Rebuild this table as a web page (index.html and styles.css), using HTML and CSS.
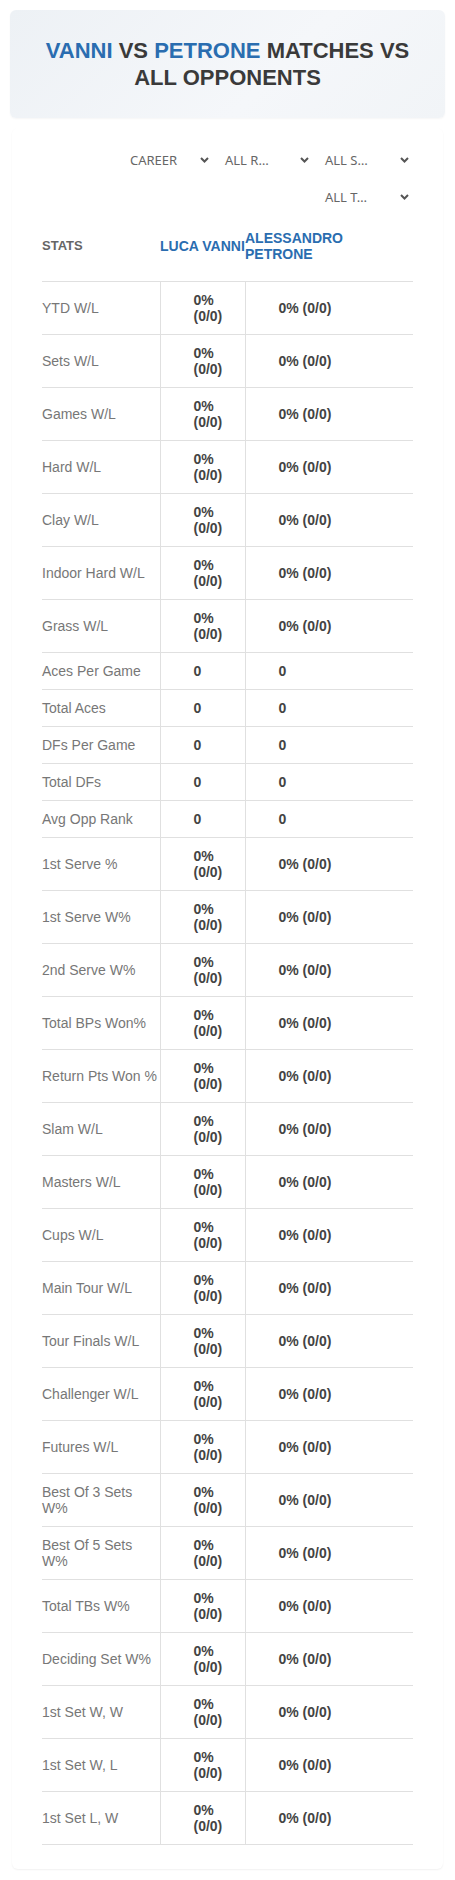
FILE: index.html
```html
<!DOCTYPE html>
<html lang="en">
<head>
    <meta charset="UTF-8">
    <title>Vanni vs Petrone</title>
    <link rel="stylesheet" href="styles.css">
</head>
<body>
    <div class="hero">
        <h1><span class="blue">VANNI</span> VS <span class="blue">PETRONE</span> MATCHES VS ALL OPPONENTS</h1>
    </div>

    <div class="card">
        <div class="filters">
            <div class="filter"><span>CAREER</span><svg width="9" height="6" viewBox="0 0 9 6"><polyline points="1,1 4.5,4.5 8,1"/></svg></div>
            <div class="filter"><span>ALL R…</span><svg width="9" height="6" viewBox="0 0 9 6"><polyline points="1,1 4.5,4.5 8,1"/></svg></div>
            <div class="filter"><span>ALL S…</span><svg width="9" height="6" viewBox="0 0 9 6"><polyline points="1,1 4.5,4.5 8,1"/></svg></div>
            <div class="filter"><span>ALL T…</span><svg width="9" height="6" viewBox="0 0 9 6"><polyline points="1,1 4.5,4.5 8,1"/></svg></div>
        </div>

        <table class="stats">
            <colgroup>
                <col class="c-label">
                <col class="c-p1">
                <col class="c-p2">
            </colgroup>
            <thead>
                <tr>
                    <th class="th-stats">STATS</th>
                    <th class="th-player">LUCA VANNI</th>
                    <th class="th-player">ALESSANDRO PETRONE</th>
                </tr>
            </thead>
            <tbody>
                <tr><td>YTD W/L</td><td>0% (0/0)</td><td>0% (0/0)</td></tr>
                <tr><td>Sets W/L</td><td>0% (0/0)</td><td>0% (0/0)</td></tr>
                <tr><td>Games W/L</td><td>0% (0/0)</td><td>0% (0/0)</td></tr>
                <tr><td>Hard W/L</td><td>0% (0/0)</td><td>0% (0/0)</td></tr>
                <tr><td>Clay W/L</td><td>0% (0/0)</td><td>0% (0/0)</td></tr>
                <tr><td>Indoor Hard W/L</td><td>0% (0/0)</td><td>0% (0/0)</td></tr>
                <tr><td>Grass W/L</td><td>0% (0/0)</td><td>0% (0/0)</td></tr>
                <tr><td>Aces Per Game</td><td>0</td><td>0</td></tr>
                <tr><td>Total Aces</td><td>0</td><td>0</td></tr>
                <tr><td>DFs Per Game</td><td>0</td><td>0</td></tr>
                <tr><td>Total DFs</td><td>0</td><td>0</td></tr>
                <tr><td>Avg Opp Rank</td><td>0</td><td>0</td></tr>
                <tr><td>1st Serve %</td><td>0% (0/0)</td><td>0% (0/0)</td></tr>
                <tr><td>1st Serve W%</td><td>0% (0/0)</td><td>0% (0/0)</td></tr>
                <tr><td>2nd Serve W%</td><td>0% (0/0)</td><td>0% (0/0)</td></tr>
                <tr><td>Total BPs Won%</td><td>0% (0/0)</td><td>0% (0/0)</td></tr>
                <tr><td>Return Pts Won %</td><td>0% (0/0)</td><td>0% (0/0)</td></tr>
                <tr><td>Slam W/L</td><td>0% (0/0)</td><td>0% (0/0)</td></tr>
                <tr><td>Masters W/L</td><td>0% (0/0)</td><td>0% (0/0)</td></tr>
                <tr><td>Cups W/L</td><td>0% (0/0)</td><td>0% (0/0)</td></tr>
                <tr><td>Main Tour W/L</td><td>0% (0/0)</td><td>0% (0/0)</td></tr>
                <tr><td>Tour Finals W/L</td><td>0% (0/0)</td><td>0% (0/0)</td></tr>
                <tr><td>Challenger W/L</td><td>0% (0/0)</td><td>0% (0/0)</td></tr>
                <tr><td>Futures W/L</td><td>0% (0/0)</td><td>0% (0/0)</td></tr>
                <tr><td>Best Of 3 Sets W%</td><td>0% (0/0)</td><td>0% (0/0)</td></tr>
                <tr><td>Best Of 5 Sets W%</td><td>0% (0/0)</td><td>0% (0/0)</td></tr>
                <tr><td>Total TBs W%</td><td>0% (0/0)</td><td>0% (0/0)</td></tr>
                <tr><td>Deciding Set W%</td><td>0% (0/0)</td><td>0% (0/0)</td></tr>
                <tr><td>1st Set W, W</td><td>0% (0/0)</td><td>0% (0/0)</td></tr>
                <tr><td>1st Set W, L</td><td>0% (0/0)</td><td>0% (0/0)</td></tr>
                <tr><td>1st Set L, W</td><td>0% (0/0)</td><td>0% (0/0)</td></tr>
            </tbody>
        </table>
    </div>
</body>
</html>
```

FILE: styles.css
```css
* {
    margin: 0;
    padding: 0;
    box-sizing: border-box;
}

body {
    font-family: "Liberation Sans", Arial, sans-serif;
    background: #fff;
    color: #444;
}

.hero {
    margin: 10px;
    height: 108px;
    border-radius: 6px;
    background: linear-gradient(135deg, #edf1f5 0%, #f5f7fa 60%, #f1f4f7 100%);
    box-shadow: 0 1px 2px rgba(0, 0, 0, 0.04);
    display: flex;
    align-items: center;
    justify-content: center;
}

.hero h1 {
    font-size: 22px;
    line-height: 27px;
    font-weight: 700;
    text-align: center;
    color: #3a3a3a;
    padding: 0 30px;
}

.hero .blue {
    color: #2a6db0;
}

.card {
    margin: 10px 12px 10px;
    padding: 17px 30px 24px;
    background: #fff;
    border-radius: 6px;
    box-shadow: 0 1px 2px rgba(0, 0, 0, 0.06);
}

.filters {
    display: flex;
    flex-wrap: wrap;
    justify-content: flex-end;
    gap: 7px 8px;
    margin-bottom: 3px;
}

.filter {
    width: 92px;
    height: 30px;
    padding: 0 4px;
    display: flex;
    align-items: center;
    justify-content: space-between;
    font-family: "Noto Sans", sans-serif;
    font-size: 13px;
    color: #666;
}

.filter:first-child {
    padding-left: 9px;
}

.filter svg polyline {
    fill: none;
    stroke: #555;
    stroke-width: 2;
}

.stats {
    width: 100%;
    border-collapse: collapse;
    table-layout: fixed;
}

.c-label { width: 118px; }
.c-p1 { width: 85px; }

.stats th {
    text-align: left;
    font-weight: 700;
    line-height: 16px;
    padding: 15px 0 19px;
    border-bottom: 1px solid #e0e0e0;
    vertical-align: middle;
}

.th-stats {
    font-size: 13px;
    color: #666;
}

.th-player {
    font-size: 14px;
    color: #2a6db0;
}

.stats td {
    font-size: 14px;
    line-height: 16px;
    padding: 10px 0;
    border-bottom: 1px solid #e0e0e0;
    vertical-align: middle;
}

.stats td:first-child {
    color: #777;
    padding-right: 2px;
}

.stats td + td {
    font-weight: 700;
    color: #444;
    padding-left: 33px;
    border-left: 1px solid #e0e0e0;
}

.stats td:nth-child(2) {
    padding-right: 10px;
}
```
